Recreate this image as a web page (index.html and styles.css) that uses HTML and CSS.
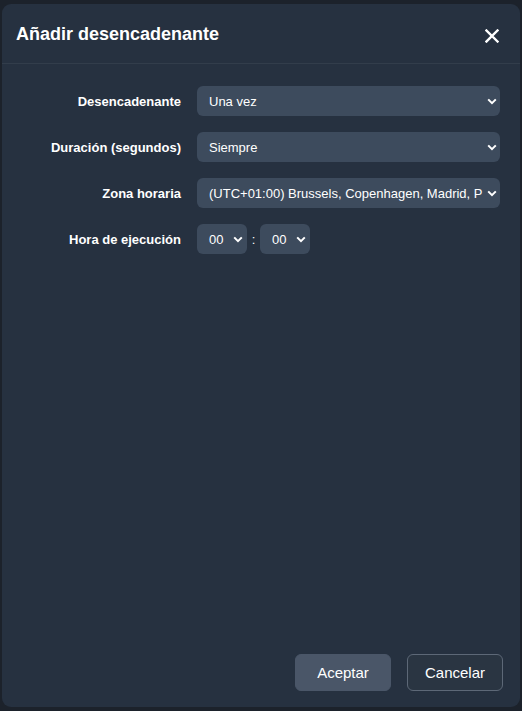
FILE: index.html
```html
<!DOCTYPE html>
<html lang="es">
<head>
<meta charset="utf-8">
<link rel="stylesheet" href="styles.css">
</head>
<body>
<div class="modal">
  <div class="modal-header">
    <h1 class="modal-title">Añadir desencadenante</h1>
    <button class="close-btn" aria-label="Cerrar">
      <svg width="14" height="14" viewBox="0 0 14 14"><path d="M1.5 1.5 L12.5 12.5 M12.5 1.5 L1.5 12.5" stroke="#fff" stroke-width="2.4" stroke-linecap="square"/></svg>
    </button>
  </div>
  <div class="modal-body">
    <div class="form-row">
      <label class="form-label">Desencadenante</label>
      <div class="select wide"><span>Una vez</span><svg class="chev" width="10" height="7" viewBox="0 0 10 7"><path d="M1.2 1.4 L5 5.2 L8.8 1.4" stroke="#fff" stroke-width="2" fill="none"/></svg></div>
    </div>
    <div class="form-row">
      <label class="form-label">Duración (segundos)</label>
      <div class="select wide"><span>Siempre</span><svg class="chev" width="10" height="7" viewBox="0 0 10 7"><path d="M1.2 1.4 L5 5.2 L8.8 1.4" stroke="#fff" stroke-width="2" fill="none"/></svg></div>
    </div>
    <div class="form-row">
      <label class="form-label">Zona horaria</label>
      <div class="select wide"><span>(UTC+01:00) Brussels, Copenhagen, Madrid, P</span><svg class="chev" width="10" height="7" viewBox="0 0 10 7"><path d="M1.2 1.4 L5 5.2 L8.8 1.4" stroke="#fff" stroke-width="2" fill="none"/></svg></div>
    </div>
    <div class="form-row">
      <label class="form-label">Hora de ejecución</label>
      <div class="time">
        <div class="select small"><span>00</span><svg class="chev" width="10" height="7" viewBox="0 0 10 7"><path d="M1.2 1.4 L5 5.2 L8.8 1.4" stroke="#fff" stroke-width="2" fill="none"/></svg></div>
        <span class="colon">:</span>
        <div class="select small"><span>00</span><svg class="chev" width="10" height="7" viewBox="0 0 10 7"><path d="M1.2 1.4 L5 5.2 L8.8 1.4" stroke="#fff" stroke-width="2" fill="none"/></svg></div>
      </div>
    </div>
  </div>
  <div class="modal-footer">
    <button class="btn btn-primary">Aceptar</button>
    <button class="btn btn-outline">Cancelar</button>
  </div>
</div>
</body>
</html>
```
FILE: styles.css
```css
html, body {
  margin: 0;
  padding: 0;
  background: #1c222b;
  font-family: "Liberation Sans", Arial, sans-serif;
  color: #fff;
}
body {
  padding: 4px 2px 4px 2px;
  height: 711px;
  box-sizing: border-box;
}
.modal {
  height: 703px;
  background: #263140;
  border-radius: 9px;
  display: flex;
  flex-direction: column;
  box-sizing: border-box;
}
.modal-header {
  display: flex;
  align-items: center;
  justify-content: space-between;
  height: 59px;
  padding: 0 21px 0 14px;
  border-bottom: 1px solid #323d4b;
}
.modal-title {
  margin: 0;
  font-size: 18px;
  font-weight: bold;
  position: relative;
  top: 1px;
}
.close-btn {
  background: none;
  border: 0;
  padding: 0;
  width: 14px;
  height: 14px;
  display: flex;
  position: relative;
  top: 2px;
}
.modal-body {
  flex: 1;
  padding: 22px 20px 0 0;
  display: flex;
  flex-direction: column;
  gap: 16px;
}
.form-row {
  display: flex;
  align-items: center;
}
.form-label {
  width: 179px;
  text-align: right;
  font-size: 13px;
  font-weight: bold;
  padding-right: 16px;
}
.select {
  height: 30px;
  background: #3d4b5d;
  border-radius: 6px;
  display: flex;
  align-items: center;
  justify-content: space-between;
  padding: 0 3px 0 12px;
  box-sizing: border-box;
  font-size: 13px;
}
.select.wide {
  flex: 1;
}
.select.small {
  width: 50px;
  padding: 0 4px 0 12px;
}
.chev {
  display: block;
}
.time {
  display: flex;
  align-items: center;
}
.colon {
  width: 13px;
  text-align: center;
  font-size: 13px;
}
.modal-footer {
  display: flex;
  justify-content: flex-end;
  gap: 16px;
  padding: 0 17px 16px 0;
}
.btn {
  width: 96px;
  height: 37px;
  border-radius: 6px;
  font-family: "Liberation Sans", Arial, sans-serif;
  font-size: 15px;
  color: #fff;
}
.btn-primary {
  background: #4a5668;
  border: 1px solid #4a5668;
}
.btn-outline {
  background: #2a3542;
  border: 1px solid #5d6877;
}
```
